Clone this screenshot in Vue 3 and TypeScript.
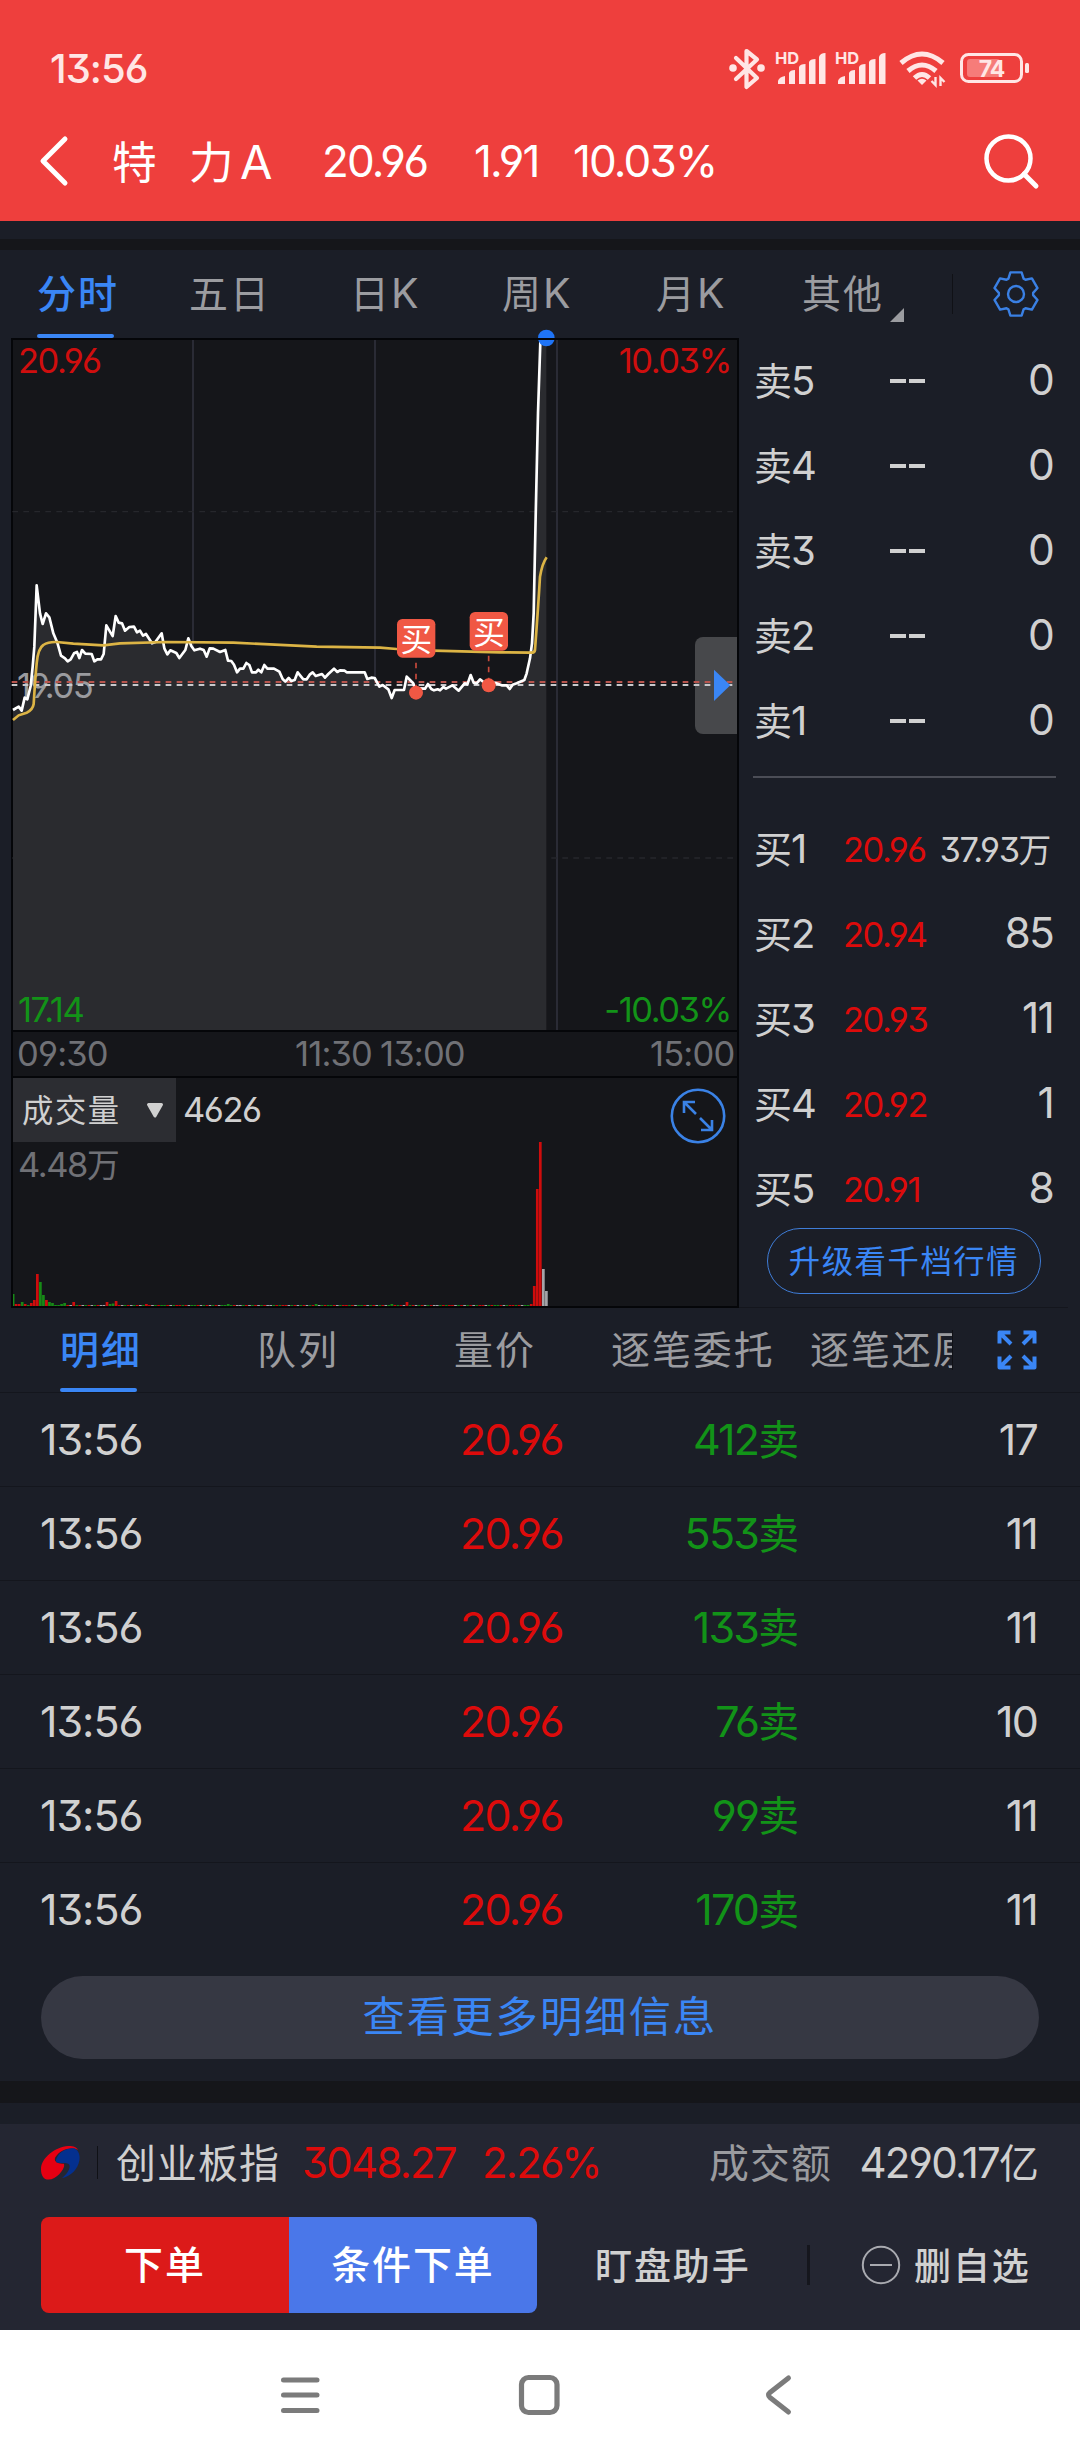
<script setup lang="ts">
import { h, type FunctionalComponent } from 'vue'

/* Splits a string into Han and Latin runs, so each gets its own size and tracking. */
const Txt: FunctionalComponent<{ t: string }> = (props) =>
  h(
    'span',
    { class: 'txt' },
    (props.t.match(/[\u4e00-\u9fff]+|[^\u4e00-\u9fff]+/g) ?? []).map((run) =>
      h('span', { class: /[\u4e00-\u9fff]/.test(run) ? 'han' : run.includes(':') ? 'lat time' : 'lat' }, run),
    ),
  )
Txt.props = ['t']

const asks = ['卖5', '卖4', '卖3', '卖2', '卖1']
const bids = [
  { name: '买1', price: '20.96', qty: '37.93万', small: true },
  { name: '买2', price: '20.94', qty: '85', small: false },
  { name: '买3', price: '20.93', qty: '11', small: false },
  { name: '买4', price: '20.92', qty: '1', small: false },
  { name: '买5', price: '20.91', qty: '8', small: false },
]
const trades = [
  { qty: '412卖', n: '17' },
  { qty: '553卖', n: '11' },
  { qty: '133卖', n: '11' },
  { qty: '76卖', n: '10' },
  { qty: '99卖', n: '11' },
  { qty: '170卖', n: '11' },
]

const price =
  '39,1140 56,1130 65,1142 74,1103 82,1108 92,1068 98,1010 103,950 110,766 120,850 128,882 138,850 148,862 160,910 172,938 183,977 195,985 203,994 212,988 222,970 231,966 238,984 246,960 256,971 275,972 283,994 292,988 303,988 311,972 319,886 330,905 338,918 347,858 356,878 366,880 375,902 388,891 402,890 411,907 420,902 429,917 438,912 456,940 466,936 485,910 493,955 502,973 511,961 529,969 538,984 556,960 565,925 574,948 583,961 600,956 611,960 620,980 629,955 640,956 660,966 676,960 684,992 694,993 702,1004 711,1027 720,1016 730,1016 739,999 748,1005 756,1027 768,1027 775,1019 784,1027 793,1005 802,1016 822,1016 838,1025 848,1047 856,1055 866,1044 874,1053 884,1050 893,1027 910,1048 920,1048 930,1033 938,1027 947,1038 966,1032 975,1043 985,1032 1002,1016 1012,1026 1020,1021 1034,1022 1040,1027 1094,1027 1102,1047 1114,1043 1124,1044 1138,1070 1148,1065 1165,1078 1175,1104 1184,1080 1212,1080 1220,1040 1230,1050 1240,1060 1248,1086 1257,1075 1275,1076 1284,1062 1294,1077 1302,1081 1313,1078 1320,1081 1330,1071 1338,1076 1357,1066 1376,1082 1394,1060 1402,1063 1412,1035 1421,1058 1430,1060 1440,1048 1455,1060 1466,1066 1485,1058 1505,1066 1520,1066 1529,1077 1538,1064 1550,1060 1573,1050 1580,1030 1590,985 1596,940 1601,850 1607,560 1614,250 1621,36 1622,30 1639,30'

type Bar = { x: number; h: number; c: string }
const R = '#cf0c0c'
const G = '#178a17'
const W = '#a4a4a8'
const spikes: Record<number, [string, number]> = {
  0: [G, 12], 1: [R, 2], 2: [R, 2], 3: [G, 4], 4: [R, 2], 6: [R, 3], 7: [R, 6], 8: [R, 32],
  9: [G, 24], 10: [G, 11], 11: [R, 6], 12: [G, 4], 13: [G, 3], 16: [G, 2], 17: [G, 3], 20: [R, 4],
  31: [R, 4], 32: [G, 2], 33: [G, 2.5], 34: [R, 5], 44: [R, 2], 71: [G, 2], 100: [G, 2],
  125: [G, 2], 130: [R, 4], 171: [R, 2], 172: [R, 20], 173: [R, 117], 174: [R, 164],
  175: [W, 37], 176: [W, 15],
}
const bars: Bar[] = Array.from({ length: 177 }, (_, i) => {
  const s = spikes[i]
  const k = (i * 7 + Math.floor(i / 5) * 3) % 11
  return { x: 3.03 * i - 1.25, h: s ? s[1] : 1, c: s ? s[0] : k < 4 ? R : k < 8 ? G : W }
})

/* Six-toothed outline around the origin. */
const gear =
  Array.from({ length: 6 }, (_, k) => {
    const a = (k * Math.PI) / 3
    return [[-7.6, -15.4], [-5.6, -21.6], [5.6, -21.6], [7.6, -15.4]]
      .map(([x, y], j) => {
        const px = (x * Math.cos(a) - y * Math.sin(a)).toFixed(2)
        const py = (x * Math.sin(a) + y * Math.cos(a)).toFixed(2)
        return `${k + j ? 'L' : 'M'}${px} ${py}`
      })
      .join('')
  }).join('') + 'Z'
</script>

<template>
  <div class="page">
    <header class="head">
      <div class="status">
        <Txt class="clock" t="13:56" />
        <svg class="sys" width="310" height="44" viewBox="725 46 310 44">
          <g fill="none" stroke="#ffe6e5" stroke-width="4.2" stroke-linejoin="round" stroke-linecap="round">
            <path d="M736 58L757 78L746.500 87V51L757 59.500L736 79" />
          </g>
          <circle cx="733" cy="68" r="3.800" fill="#ffe6e5" />
          <circle cx="761" cy="68" r="3.800" fill="#ffe6e5" />
          <g v-for="o in [0, 60]" :key="o" :transform="`translate(${o} 0)`" fill="#ffe6e5">
            <text x="775" y="64" class="hd">HD</text>
            <path d="M778 84v-3q1-4 7-5v8zM789 84V73q1-3 6-3v14zM799 84V67q1-3 6.500-3v20zM809 84V62q1-3 6.500-3v25zM819 84V57q1-4 6.500-4v31z" />
          </g>
          <g fill="none" stroke="#ffe6e5" stroke-width="5">
            <path d="M901 63Q922 45 943 63" />
            <path d="M908 71Q922 59 936 71" />
            <path d="M914.500 78Q922 71 929.500 78" />
          </g>
          <path d="M917.500 80.500Q922 77 926.500 80.500L922 85Z" fill="#ffe6e5" />
          <path d="M935.500 77v8l-4-4M940.500 86v-8l4 4" fill="none" stroke="#ffe6e5" stroke-width="2.400" />
          <rect x="961.500" y="54.500" width="60" height="27" rx="7" fill="none" stroke="#ffe6e5" stroke-width="3" />
          <rect x="967" y="59" width="33" height="18" rx="3" fill="#f67c79" />
          <text x="991.500" y="77" text-anchor="middle" class="batt">74</text>
          <rect x="1025" y="63" width="4" height="10" rx="1.500" fill="#ffe6e5" />
        </svg>
      </div>
      <div class="title">
        <svg width="34" height="54" viewBox="0 0 34 54">
          <path d="M28 5L6 27L28 49" fill="none" stroke="#fff" stroke-width="5" stroke-linecap="round" stroke-linejoin="round" />
        </svg>
        <Txt class="nm" t="特" />
        <Txt class="nm" t="力" />
        <Txt class="nm" t="A" />
        <Txt t="20.96" />
        <Txt t="1.91" />
        <Txt t="10.03%" />
        <svg width="56" height="58" viewBox="984 131 56 58" fill="none" stroke="#fff">
          <circle cx="1008.500" cy="157.500" r="22" stroke-width="4.500" />
          <path d="M1024 173L1036 185" stroke-width="5" stroke-linecap="round" />
        </svg>
      </div>
    </header>
    <div class="band top" />

    <nav class="tabs period">
      <span class="tab on"><Txt t="分时" /></span>
      <span class="tab"><Txt t="五日" /></span>
      <span class="tab"><Txt t="日K" /></span>
      <span class="tab"><Txt t="周K" /></span>
      <span class="tab"><Txt t="月K" /></span>
      <span class="tab"><Txt t="其他" /><i class="corner" /></span>
      <i class="bar" />
      <svg width="48" height="48" viewBox="-24 -24 48 48" fill="none" stroke="#3a80e4" stroke-width="2.400" stroke-linejoin="round">
        <path :d="gear" />
        <circle r="8" />
      </svg>
    </nav>

    <section class="market">
      <div class="chart">
        <div class="plot">
          <svg class="lines" width="724" height="690" viewBox="39 30 2172 2070">
            <g stroke="#2a2b35" stroke-width="6">
              <path d="M579 30V2100M1125 30V2100M1671 30V2100" />
            </g>
            <g stroke="#26272c" stroke-width="4" stroke-dasharray="17 16">
              <path d="M37 545H2211M37 1584H2211" />
            </g>
            <polygon :points="`${price} 1639,2100 39,2100`" fill="#2a2b2f" />
          </svg>
          <Txt class="lab tl up" t="20.96" />
          <Txt class="lab tr up" t="10.03%" />
          <Txt class="lab ml" t="19.05" />
          <Txt class="lab bl dn" t="17.14" />
          <Txt class="lab br dn" t="-10.03%" />
          <div class="drawer" />
          <svg class="lines" width="724" height="690" viewBox="39 30 2172 2070">
            <g stroke-width="6" stroke-dasharray="17 16" fill="none">
              <path d="M35 1056H2200" stroke="#b9554e" />
              <path d="M35 1065H2200" stroke="#c9c9cc" />
            </g>
            <polyline :points="price" fill="none" stroke="#fff" stroke-width="8" stroke-linejoin="round" />
            <path d="M39 1170L56 1156L80 1148Q98 1140 101 1122Q106 1040 110 1000Q114 955 130 945Q145 935 170 936L220 941L310 946L360 940L500 936L700 938L950 950L1140 953L1190 957L1300 962L1500 967L1590 968Q1604 969 1605 960Q1614 840 1620 740Q1627 700 1640 682" fill="none" stroke="#dcb445" stroke-width="8" />
            <circle cx="1639" cy="24" r="25" fill="#1f74f6" />
            <path d="M1600 27H1680" stroke="#050609" stroke-width="6" />
            <path d="M1248 998V1080M1466 977V1060" stroke="#c84a3c" stroke-width="5" stroke-dasharray="17 16" />
            <rect x="1191" y="867" width="115" height="116" rx="16" fill="#f05844" />
            <rect x="1409" y="846" width="115" height="116" rx="16" fill="#f05844" />
            <text x="1249" y="962" class="buy">买</text>
            <text x="1467" y="941" class="buy">买</text>
            <circle cx="1248" cy="1088" r="21" fill="#f05844" />
            <circle cx="1466" cy="1066" r="21" fill="#f05844" />
            <path d="M2142 1019V1113L2191 1066Z" fill="#3a86f5" />
          </svg>
        </div>
        <div class="hours">
          <Txt t="09:30" />
          <Txt t="11:30" />
          <Txt t="13:00" />
          <Txt t="15:00" />
        </div>
        <div class="volume">
          <div class="vhead">
            <div class="pick">
              <Txt t="成交量" />
              <svg width="20" height="17" viewBox="0 0 20 17">
                <path d="M3.500 2.500H16.500L10 14Z" fill="#d0d0d0" stroke="#d0d0d0" stroke-width="3" stroke-linejoin="round" />
              </svg>
            </div>
            <Txt class="vnum" t="4626" />
            <svg class="zoom" width="58" height="58" viewBox="-29 -29 58 58" fill="none" stroke="#3a82e6">
              <circle r="26.200" stroke-width="2.600" />
              <path d="M-2 -2L-13 -13M-14 -3V-14H-3M2 2L13 13M14 4V14H3" stroke-width="2.600" />
            </svg>
          </div>
          <Txt class="vmax" t="4.48万" />
          <svg class="vols" width="724" height="166" viewBox="0 0 724 166">
            <rect v-for="(b, i) in bars" :key="i" :x="b.x" :y="166 - b.h" width="2.700" :height="b.h" :fill="b.c" />
          </svg>
        </div>
      </div>

      <div class="book">
        <div v-for="a in asks" :key="a" class="lvl">
          <Txt class="who" :t="a" />
          <span class="dash"><i /><i /></span>
          <Txt class="qty" t="0" />
        </div>
        <div class="rule" />
        <div v-for="b in bids" :key="b.name" class="lvl">
          <Txt class="who" :t="b.name" />
          <Txt class="px" :t="b.price" />
          <Txt class="qty" :class="{ small: b.small }" :t="b.qty" />
        </div>
        <div class="upgrade"><Txt t="升级看千档行情" /></div>
      </div>
    </section>

    <nav class="tabs detail">
      <div class="strip">
        <span class="tab on"><Txt t="明细" /></span>
        <span class="tab"><Txt t="队列" /></span>
        <span class="tab"><Txt t="量价" /></span>
        <span class="tab"><Txt t="逐笔委托" /></span>
        <span class="tab"><Txt t="逐笔还原" /></span>
      </div>
      <i class="bar" />
      <svg width="40" height="40" viewBox="-20 -20 40 40">
        <g v-for="a in [0, 90, 180, 270]" :key="a" :transform="`rotate(${a})`">
          <path d="M-17.500 -6.500V-17.500H-6.500M-17 -17L-6 -6" fill="none" stroke="#3a86f5" stroke-width="4" stroke-linejoin="round" />
        </g>
      </svg>
    </nav>

    <div class="trades">
      <div v-for="(r, i) in trades" :key="i" class="trade">
        <Txt t="13:56" />
        <Txt class="up" t="20.96" />
        <Txt class="dn" :t="r.qty" />
        <Txt class="cnt" :t="r.n" />
      </div>
    </div>
    <div class="more"><Txt t="查看更多明细信息" /></div>
    <div class="band low" />

    <footer class="foot">
      <div class="index">
        <svg width="39" height="34" viewBox="119 760 113 88" preserveAspectRatio="none">
          <path d="M119 820C119 790 165 758 205 760C218 761 225 766 226 770C205 762 175 768 160 790C155 802 170 806 185 806C192 815 165 848 140 847C128 847 119 838 119 820Z" fill="#e60012" />
          <path d="M163 795C170 775 195 764 215 766C228 770 233 785 230 798C226 820 205 838 180 843C195 832 203 820 202 811C200 800 175 806 165 803C162 801 162 798 163 795Z" fill="#04308f" />
        </svg>
        <i class="bar" />
        <Txt t="创业板指" />
        <Txt class="up" t="3048.27" />
        <Txt class="up" t="2.26%" />
        <Txt class="dim" t="成交额" />
        <Txt class="end" t="4290.17亿" />
      </div>
      <div class="acts">
        <div class="act order"><Txt t="下单" /></div>
        <div class="act cond"><Txt t="条件下单" /></div>
        <Txt class="watch" t="盯盘助手" />
        <i class="bar" />
        <svg width="40" height="40" viewBox="-20 -20 40 40" fill="none" stroke="#a9aab0" stroke-width="2">
          <circle r="18.200" />
          <path d="M-11 0H11" />
        </svg>
        <Txt class="del" t="删自选" />
      </div>
    </footer>

    <div class="sysnav">
      <svg width="1080" height="130" viewBox="0 2330 1080 130" fill="none" stroke="#7b7b7b">
        <path d="M283.500 2380H317M283.500 2395H317M283.500 2410.500H317" stroke-width="5" stroke-linecap="round" />
        <rect x="521.500" y="2377.500" width="35.500" height="35" rx="7" stroke-width="5.200" />
        <path d="M788.500 2378L770 2392.500Q767 2395 770 2397.500L788.500 2412" stroke-width="5" stroke-linecap="round" />
      </svg>
    </div>
  </div>
</template>

<style>
body {
  margin: 0;
  background: #1b1e27;
}
.txt {
  font-family: Inter, 'Noto Sans CJK SC', sans-serif;
  font-feature-settings: 'cv03', 'cv04', 'cv09';
  line-height: 1;
  white-space: nowrap;
  display: inline-block;
}
.txt .lat {
  letter-spacing: -0.042em;
}
.txt .time {
  letter-spacing: -0.024em;
}
.txt .han {
  font-family: 'Noto Sans CJK SC', sans-serif;
  font-size: 0.95em;
  letter-spacing: 0.05em;
  line-height: 0;
}
</style>

<style scoped>
.page {
  width: 1080px;
  height: 2460px;
  display: flex;
  flex-direction: column;
  background: #1b1e27;
  color: #d0d0d0;
  overflow: hidden;
}
.up { color: #dd0b0b; }
.dn { color: #129318; }

/* header */
.head {
  height: 221px;
  background: #ee3f3d;
  color: #fff;
  flex: none;
}
.status {
  height: 90px;
  padding: 46px 45px 0 50px;
  box-sizing: border-box;
  display: flex;
  justify-content: space-between;
}
.clock {
  font-size: 40px;
  font-weight: 500;
  color: #ffe6e5;
  margin-top: 3px;
}
.hd {
  font: 700 16.5px Inter, sans-serif;
}
.batt {
  font: 700 23px Inter, sans-serif;
  letter-spacing: -1px;
  fill: #ffe6e5;
}
.title {
  height: 142px;
  display: grid;
  grid-template-columns: 75px 77px 51px 82px 152px 99px 411px 60px;
  padding-left: 37px;
  align-items: center;
  font-size: 44px;
}
.nm { font-size: 47px; }

.band { background: #15161a; flex: none; }
.band.top { height: 11px; margin-top: 18px; }
.band.low { height: 22px; margin-top: 22px; }

/* tabs */
.tabs {
  flex: none;
  display: flex;
  align-items: center;
  font-size: 41px;
  color: #9b9ca0;
}
.tab {
  position: relative;
  height: 100%;
  display: flex;
  align-items: center;
}
.tab > .txt { margin-top: -2px; }
.tab.on { color: #3a86f5; font-weight: 500; }
.tab.on::after {
  content: '';
  position: absolute;
  left: 0;
  width: 77px;
  bottom: 0;
  height: 4px;
  border-radius: 2px;
  background: #3a86f5;
}
.bar {
  width: 1px;
  height: 40px;
  background: #101116;
}
.period {
  height: 88px;
  display: grid;
  grid-template-columns: 152px 161px 152px 154px 146px 150px 40px 48px;
  padding-left: 37px;
}
.corner {
  border: 7px solid transparent;
  border-right-color: #9b9ca0;
  border-bottom-color: #9b9ca0;
  margin: 42px 0 0 6px;
}

/* chart */
.market {
  display: flex;
  height: 970px;
  flex: none;
  padding-left: 11px;
}
.chart {
  width: 724px;
  border: 2px solid #050609;
  background: #15161a;
  flex: none;
}
.plot { position: relative; height: 690px; }
.lines { position: absolute; left: 0; top: 0; overflow: visible; }
.lab { position: absolute; font-size: 34.500px; color: #9a9b9f; }
.lab.up { color: #cf0e0e; }
.lab.dn { color: #129318; }
.tl { left: 5px; top: 4px; }
.tr { right: 6px; top: 4px; }
.ml { left: 4px; top: 329px; }
.bl { left: 5px; bottom: 3px; }
.br { right: 6px; bottom: 3px; }
.drawer {
  position: absolute;
  right: 0;
  top: 297px;
  width: 42px;
  height: 97px;
  border-radius: 8px 0 0 8px;
  background: #47484b;
}
.buy {
  font: 95px 'Noto Sans CJK SC', sans-serif;
  text-anchor: middle;
  fill: #fff;
}
.hours {
  height: 44px;
  border-top: 2px solid #050609;
  border-bottom: 2px solid #050609;
  display: grid;
  grid-template-columns: 278px 85px 270px 91px;
  padding: 1px 0 0 4px;
  box-sizing: border-box;
  height: 48px;
  align-items: center;
  font-size: 34.5px;
  color: #707176;
}
.volume { height: 228px; position: relative; }
.vhead { display: flex; height: 64px; align-items: center; }
.pick {
  width: 163px;
  height: 64px;
  background: #2c2d32;
  display: flex;
  align-items: center;
  gap: 24px;
  padding-left: 9px;
  box-sizing: border-box;
  font-size: 33px;
}
.vnum { font-size: 34.500px; margin: 0 auto 0 7px; }
.zoom { margin: 12px 10px 0 0; }
.vmax { font-size: 34.500px; color: #707176; margin: 6px 0 0 5px; }
.vols { position: absolute; left: 0; bottom: 0; }

/* order book */
.book {
  flex: 1;
  margin-right: 12px;
  border-bottom: 1px solid #14161d;
}
.lvl {
  height: 85px;
  display: grid;
  grid-template-columns: 89px 96px 115px;
  padding-left: 15px;
  align-items: center;
}
.who { font-size: 40px; }
.who :deep(.han) { letter-spacing: -0.03em; }
.dash { display: flex; gap: 3px; margin-left: 47px; }
.dash i { width: 16px; height: 4px; background: #d0d0d0; }
.px { font-size: 34.500px; color: #dd0b0b; margin-top: 4px; }
.qty { font-size: 42.500px; text-align: right; padding-right: 1px; }
.qty.small { font-size: 34.500px; margin-top: 4px; }
.rule { height: 2px; background: #4b4d56; margin: 13px 12px 28px 14px; }
.upgrade {
  width: 274px;
  height: 66px;
  box-sizing: border-box;
  margin: -3px 0 0 28px;
  border: 1.500px solid #3f7dd8;
  border-radius: 33px;
  color: #3a86f5;
  font-size: 33px;
  display: flex;
  align-items: center;
  justify-content: center;
}

/* trade details */
.detail { height: 84px; border-bottom: 1px solid #14161d; position: relative; }
.strip {
  width: 892px;
  height: 84px;
  padding-left: 60px;
  overflow: hidden;
  display: grid;
  grid-template-columns: 197px 197px 157px 199px 142px;
}
.detail svg { margin-left: 44px; }
.trade {
  height: 93px;
  border-bottom: 1px solid #14161d;
  display: grid;
  grid-template-columns: 420px 140px 201px 236px;
  padding-left: 40px;
  align-items: center;
  font-size: 43px;
}
.trade:last-child { border-color: transparent; }
.trade .dn, .cnt { text-align: right; }
.more {
  flex: none;
  width: 998px;
  height: 83px;
  margin: 19px 0 0 41px;
  border-radius: 42px;
  background: #363843;
  color: #3a86f5;
  font-size: 44.500px;
  display: flex;
  align-items: center;
  justify-content: center;
}
.more .txt { margin-top: -2px; }

/* footer */
.foot {
  flex: none;
  margin-top: 21px;
  height: 206px;
  background: #242632;
}
.index {
  height: 77px;
  display: grid;
  grid-template-columns: 56px 19px 186px 180px 227px 117px 214px;
  padding-left: 41px;
  align-items: center;
  font-size: 42px;
}
.index :deep(.han) { letter-spacing: 0.028em; }
.index .bar { height: 33px; }
.index .end { text-align: right; }
.dim { color: #9a9b9f; }
.acts {
  margin-top: 16px;
  height: 96px;
  padding-left: 41px;
  display: flex;
  align-items: center;
}
.act {
  width: 248px;
  height: 96px;
  display: flex;
  align-items: center;
  justify-content: center;
  font-size: 41px;
  font-weight: 500;
  color: #fff;
}
.act .txt { margin-top: -2px; }
.order { background: #dc1a19; border-radius: 8px 0 0 8px; }
.cond { background: #4a77e9; border-radius: 0 8px 8px 0; }
.watch, .del { font-size: 39px; font-weight: 500; }
.watch { width: 212px; margin-left: 58px; }
.acts .bar { width: 3px; background: #15161d; }
.acts svg { margin: 0 13px 0 51px; }

.sysnav { height: 130px; background: #fff; flex: none; }
.sysnav svg { display: block; }
</style>
